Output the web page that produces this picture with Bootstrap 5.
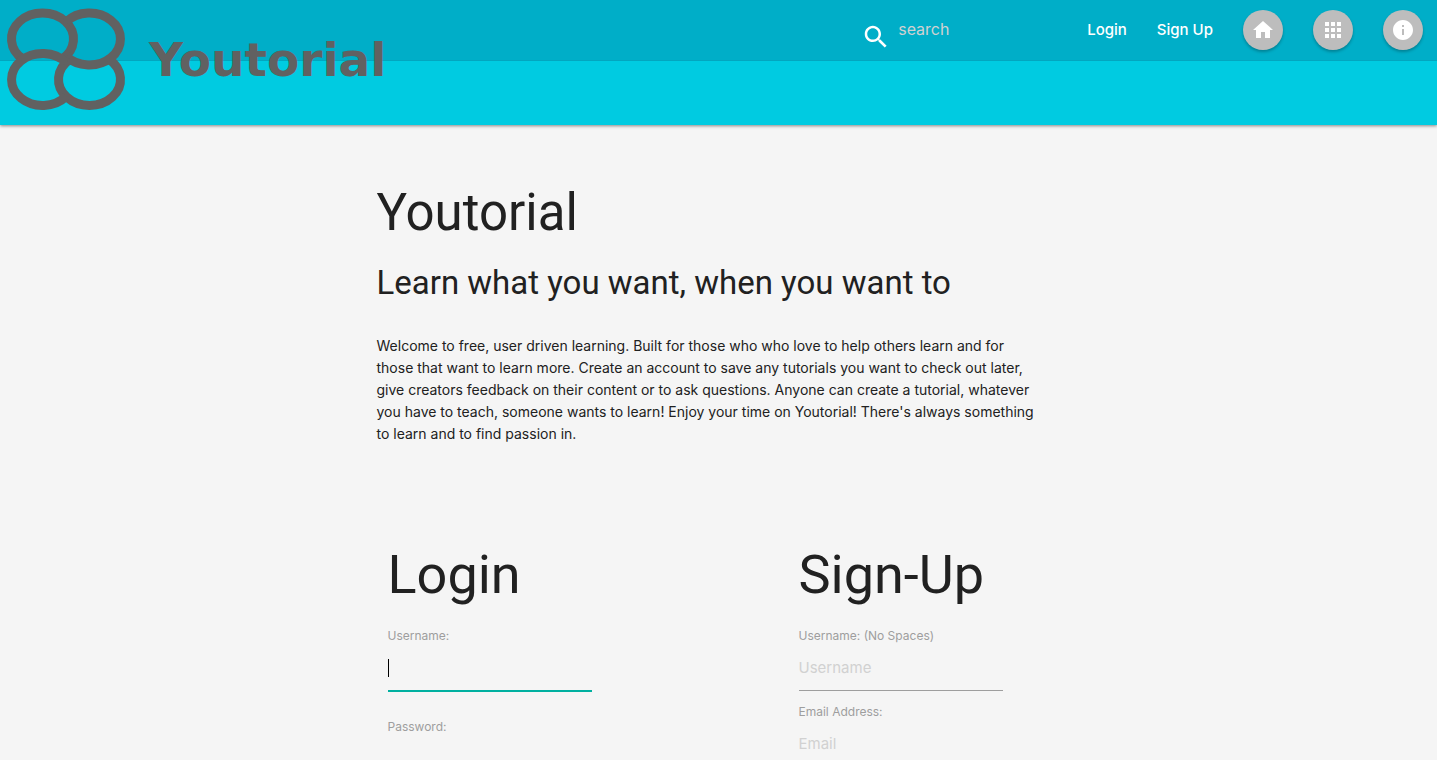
<!DOCTYPE html>
<html lang="en">
<head>
<meta charset="utf-8">
<meta name="viewport" content="width=device-width, initial-scale=1">
<title>Youtorial</title>
<link rel="stylesheet" href="https://cdn.jsdelivr.net/npm/bootstrap@5.3.0/dist/css/bootstrap.min.css">
<style>
  body { background: #f5f5f5; color: #212121; font-family: Inter, sans-serif; font-size: 15px; line-height: 22px; }
  .site-header { background: #00cbe1; padding-bottom: 64px; box-shadow: 0 1px 3px rgba(0,0,0,.45); }
  .top-bar { background: #00aec8; min-height: 61px; padding-right: 14px; border-bottom: 1px solid #02a6bf; }
  .brand { top: 0; left: 0; color: #616161; }
  .brand:hover { color: #616161; }
  .brand-name { font: bold 47px/52px "DejaVu Sans", sans-serif; padding: 2px 0 0 16px; }
  .menu { gap: 30px; }
  .menu a { color: #fff; font-weight: 500; text-decoration: none; }
  .round-btn { width: 40px; height: 40px; background: #bdbdbd; box-shadow: 0 2px 3px rgba(0,0,0,.25); }
  .search-box { width: 226px; gap: 7px; }
  .search-box svg { margin-top: 14px; }
  input.line-input { border: 0; outline: 0; background: transparent; padding: 0; min-width: 0; }
  .search-box input { font-size: 16px; line-height: 22px; color: #fff; }
  .search-box input.line-input { padding-bottom: 2px; }
  .search-box input::placeholder { color: #d1d1d1; opacity: 1; }
  .intro { max-width: 684px; padding-top: 56px; }
  h1 { font: 400 51px/64px Roboto, sans-serif; margin-bottom: 18px; }
  .intro h2 { font: 400 33px/40px Roboto, sans-serif; margin-bottom: 32px; }
  .intro p { max-width: 662px; font-size: 14px; }
  .forms { max-width: 822px; padding-top: 98px; }
  .form-col { padding-left: 80px; }
  .form-title { font: 400 54px/64px Roboto, sans-serif; margin-bottom: 17px; }
  .field { max-width: 204px; }
  .field label { font-size: 12px; line-height: 24px; color: #9e9e9e; }
  .field input.line-input { height: 43px; font-size: 15px; padding-bottom: 3px; border-bottom: 1px solid #9e9e9e; }
  .field input.line-input:focus { border-bottom-color: #00b0a0; box-shadow: 0 1px 0 #00b0a0; }
  /* full-height caret while the focused box is still empty */
  .field input.line-input:focus:placeholder-shown { caret-color: transparent; background: linear-gradient(#000, #000) 0 11px / 1px 18px no-repeat; }
  .field input::placeholder { color: #d1d1d1; opacity: 1; }
  .login-fields { gap: 24px; }
  .signup-fields { gap: 9px; }
</style>
</head>
<body>
<header class="site-header position-relative">
  <nav class="top-bar d-flex align-items-center justify-content-end">
    <form class="search-box d-flex align-items-center" role="search">
      <svg width="30" height="30" viewBox="0 0 24 24" fill="#fff" aria-hidden="true" class="flex-shrink-0"><path d="M15.5 14h-.79l-.28-.27C15.41 12.59 16 11.11 16 9.5 16 5.91 13.09 3 9.5 3S3 5.91 3 9.5 5.91 16 9.5 16c1.61 0 3.09-.59 4.23-1.57l.27.28v.79l5 4.99L20.49 19l-4.99-5zm-6 0C7.01 14 5 11.99 5 9.5S7.01 5 9.5 5 14 7.01 14 9.5 11.99 14 9.5 14z"/></svg>
      <input class="line-input w-100" type="search" placeholder="search" aria-label="Search">
    </form>
    <div class="menu d-flex align-items-center">
      <a href="#login">Login</a>
      <a href="#signup">Sign Up</a>
      <a href="#" class="round-btn rounded-circle d-flex align-items-center justify-content-center" aria-label="Home"><svg width="24" height="24" viewBox="0 0 24 24" fill="#fff"><path d="M10 20v-6h4v6h5v-8h3L12 3 2 12h3v8z"/></svg></a>
      <a href="#" class="round-btn rounded-circle d-flex align-items-center justify-content-center" aria-label="Browse"><svg width="24" height="24" viewBox="0 0 24 24" fill="#fff"><path d="M4 8h4V4H4v4zm6 12h4v-4h-4v4zm-6 0h4v-4H4v4zm0-6h4v-4H4v4zm6 0h4v-4h-4v4zm6-10v4h4V4h-4zm-6 4h4V4h-4v4zm6 6h4v-4h-4v4zm0 6h4v-4h-4v4z"/></svg></a>
      <a href="#" class="round-btn rounded-circle d-flex align-items-center justify-content-center" aria-label="About"><svg width="24" height="24" viewBox="0 0 24 24" fill="#fff"><path d="M12 2C6.48 2 2 6.48 2 12s4.48 10 10 10 10-4.48 10-10S17.52 2 12 2zm1 15h-2v-6h2v6zm0-8h-2V7h2v2z"/></svg></a>
    </div>
  </nav>
  <a href="#" class="brand position-absolute d-flex align-items-center text-decoration-none">
    <svg width="133" height="118" viewBox="0 0 133 118" fill="none" stroke="#616161" stroke-width="9" aria-hidden="true">
      <path d="M23.1 59.2A31 26 0 1 1 61.9 59.2"/>
      <path d="M66 22A31 26 0 1 1 66 56"/>
      <path d="M108.9 59.2A31 26 0 1 1 70.1 59.2"/>
      <path d="M66 96.5A31 26 0 1 1 66 62.5"/>
    </svg>
    <span class="brand-name">Youtorial</span>
  </a>
</header>
<main>
  <section class="intro mx-auto">
    <h1>Youtorial</h1>
    <h2>Learn what you want, when you want to</h2>
    <p class="mb-0">Welcome to free, user driven learning. Built for those who who love to help others learn and for those that want to learn more. Create an account to save any tutorials you want to check out later, give creators feedback on their content or to ask questions. Anyone can create a tutorial, whatever you have to teach, someone wants to learn! Enjoy your time on Youtorial! There's always something to learn and to find passion in.</p>
  </section>
  <section class="forms mx-auto">
    <div class="row g-0">
      <div class="col-6 form-col" id="login">
        <h2 class="form-title">Login</h2>
        <form class="login-fields d-flex flex-column">
          <div class="field d-flex flex-column"><label for="lu">Username:</label><input class="line-input" id="lu" type="text" placeholder=" " autofocus></div>
          <div class="field d-flex flex-column"><label for="lp">Password:</label><input class="line-input" id="lp" type="password"></div>
        </form>
      </div>
      <div class="col-6 form-col" id="signup">
        <h2 class="form-title">Sign-Up</h2>
        <form class="signup-fields d-flex flex-column">
          <div class="field d-flex flex-column"><label for="su">Username: (No Spaces)</label><input class="line-input" id="su" type="text" placeholder="Username"></div>
          <div class="field d-flex flex-column"><label for="se">Email Address:</label><input class="line-input" id="se" type="email" placeholder="Email"></div>
        </form>
      </div>
    </div>
  </section>
</main>
<script src="https://cdn.jsdelivr.net/npm/bootstrap@5.3.0/dist/js/bootstrap.bundle.min.js"></script>
</body>
</html>
